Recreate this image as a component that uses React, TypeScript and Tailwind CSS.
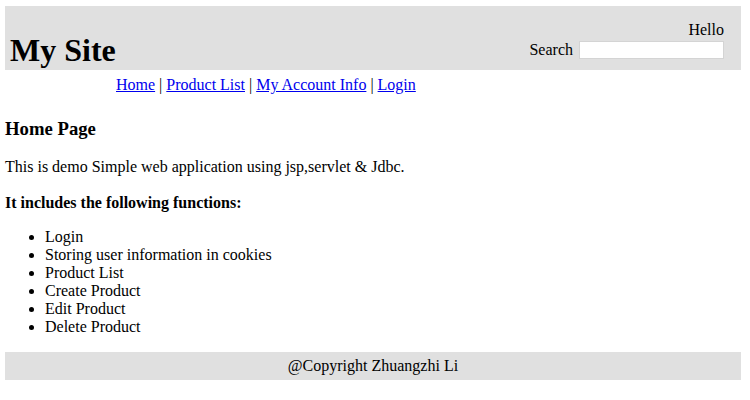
const MENU_LINKS = ["Home", "Product List", "My Account Info", "Login"];

const FUNCTIONS = [
  "Login",
  "Storing user information in cookies",
  "Product List",
  "Create Product",
  "Edit Product",
  "Delete Product",
];

const Header = () => (
  <header className="flex h-[64px] items-end justify-between bg-[#e0e0e0]">
    <h1 className="mb-[2px] pl-[5px] text-[32px] font-bold leading-[36px]">My Site</h1>
    <div className="flex flex-col items-end pb-[11px] pr-[17px]">
      <div className="text-[16px] leading-[18px]">Hello</div>
      <div className="mt-[2px] flex items-center gap-[6px]">
        <span className="text-[16px] leading-[18px]">Search</span>
        <input className="h-[18px] w-[145px] border border-[#d4d4d4] bg-white outline-none" />
      </div>
    </div>
  </header>
);

const Menu = () => (
  <nav className="pl-[111px] pt-[6px] text-[16px] leading-[18px]">
    {MENU_LINKS.map((label, i) => (
      <span key={label}>
        {i > 0 && " | "}
        <a href="#" className="text-[#0000ee] underline">
          {label}
        </a>
      </span>
    ))}
  </nav>
);

export default function App() {
  return (
    <div className="w-[736px] ml-[5px] pt-[6px] font-['Liberation_Serif',serif] text-black">
      <Header />
      <Menu />

      {/* 본문 */}
      <main>
        <h3 className="mt-[24px] text-[18.72px] font-bold leading-[21px]">Home Page</h3>
        <p className="mt-[19px] text-[16px] leading-[18px]">
          This is demo Simple web application using jsp,servlet &amp; Jdbc.
        </p>
        <h4 className="mt-[18px] text-[16px] font-bold leading-[18px]">
          It includes the following functions:
        </h4>
        <ul className="mt-[16px] list-disc pl-[40px] text-[16px] leading-[18px]">
          {FUNCTIONS.map((item) => (
            <li key={item}>{item}</li>
          ))}
        </ul>
      </main>

      <footer className="mt-[16px] bg-[#e0e0e0] py-[5px] text-center text-[16px] leading-[18px]">
        @Copyright Zhuangzhi Li
      </footer>
    </div>
  );
}
